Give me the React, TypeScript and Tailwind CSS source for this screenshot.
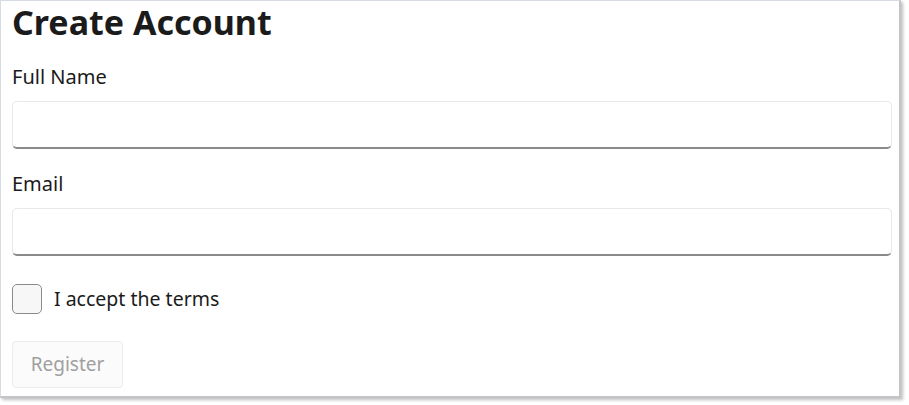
import React from 'react';

const font = { fontFamily: '"Noto Sans", "Open Sans", sans-serif' };

const Field: React.FC<{ label: string }> = ({ label }) => (
  <div className="flex flex-col mt-[22px]">
    <label className="text-[20px] leading-[26px] text-[#1b1b1b]">{label}</label>
    <div className="mt-[11px] h-[48px] rounded-[5px] border border-[#e8e8e8] border-b-2 border-b-[#8a8a8a] bg-white" />
  </div>
);

const App: React.FC = () => {
  return (
    <div className="w-[909px] h-[405px] bg-white overflow-hidden" style={font}>
      {/* window panel */}
      <div className="w-[901px] h-[398px] bg-white border-l border-t border-[#d6dbe4] border-r-2 border-b-2 border-r-[#c4c4c8] border-b-[#c4c4c8] shadow-[2px_2px_3px_rgba(0,0,0,0.25)] pl-[11px] pr-[7px]">
        <h1 className="text-[34px] leading-[40px] font-bold text-[#1b1b1b] mt-[1px]">Create Account</h1>
        <Field label="Full Name" />
        <Field label="Email" />
        <div className="flex items-center gap-[12px] mt-[28px]">
          <div className="w-[30px] h-[30px] rounded-[5px] border border-[#8a8a8a] bg-[#f7f7f7]" />
          <span className="text-[19.5px] leading-[26px] text-[#1b1b1b]">I accept the terms</span>
        </div>
        <button
          disabled
          className="mt-[27px] w-[111px] h-[47px] rounded-[4px] border border-[#ececec] bg-[#fbfbfb] text-[19px] text-[#a0a0a0]"
          style={font}
        >
          Register
        </button>
      </div>
    </div>
  );
};

export default App;
